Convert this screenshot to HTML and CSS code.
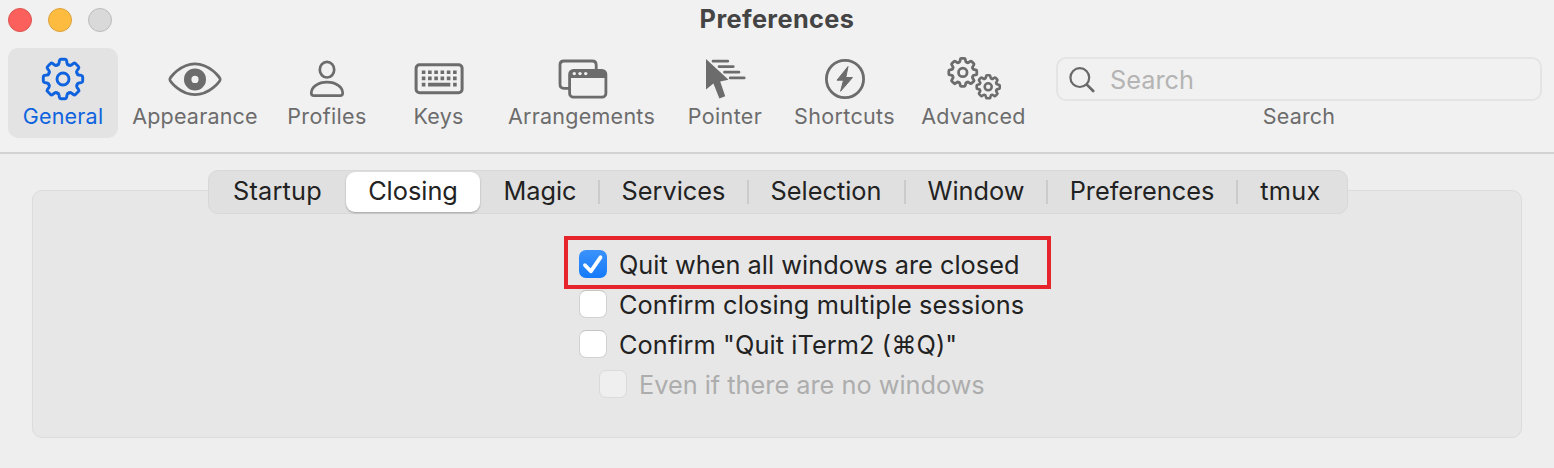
FILE: index.html
```html
<!DOCTYPE html>
<html lang="en">
<head>
<meta charset="utf-8">
<title>Preferences</title>
<link rel="stylesheet" href="styles.css">
</head>
<body>
<svg class="defs" aria-hidden="true">
  <defs>
    <path id="tooth" d="M-5.82-14.04Q-4.2-14.3-4-15.8L-3.6-18.3Q-3.4-19.7-2.1-19.7H2.1Q3.4-19.7 3.6-18.3L4-15.8Q4.2-14.3 5.82-14.04"/>
    <g id="gear">
      <use href="#tooth"/><use href="#tooth" transform="rotate(45)"/><use href="#tooth" transform="rotate(90)"/><use href="#tooth" transform="rotate(135)"/>
      <use href="#tooth" transform="rotate(180)"/><use href="#tooth" transform="rotate(225)"/><use href="#tooth" transform="rotate(270)"/><use href="#tooth" transform="rotate(315)"/>
      <circle r="6"/>
    </g>
  </defs>
</svg>
<div class="window">
  <header class="header">
    <div class="titlebar">
      <div class="lights"><i class="light close"></i><i class="light minimize"></i><i class="light zoom"></i></div>
      <h1 class="title">Preferences</h1>
    </div>
    <nav class="toolbar">
      <a class="tool general active"><svg viewBox="-28 -22 56 44"><use href="#gear" class="line" stroke-width="2.9"/></svg><span>General</span></a>
      <a class="tool appearance"><svg viewBox="-28 -22 56 44"><path class="line" stroke-width="2.7" d="M-25.2.5C-25.2-1-15-15.2 0-15.2S25.2-1 25.2.5 15 15.6 0 15.6-25.2 2-25.2.5Z"/><circle cy=".4" r="7.3" class="line" stroke-width="7.4"/></svg><span>Appearance</span></a>
      <a class="tool profiles"><svg viewBox="-28 -22 56 44"><ellipse class="line" stroke-width="2.7" cy="-9.3" rx="7.2" ry="7.8"/><path class="line" stroke-width="2.7" d="M-15.7 14C-15.7 8-9 3.2 0 3.2S15.7 8 15.7 14Q15.7 16.6 13.2 16.6H-13.2Q-15.7 16.6-15.7 14Z"/></svg><span>Profiles</span></a>
      <a class="tool keys"><svg viewBox="-28 -22 56 44"><rect class="line" stroke-width="3" x="-22.9" y="-14.3" width="46" height="28" rx="3.5"/><path class="line dots" stroke-width="3.6" d="M-17.2-6.8H18M-17.2-.6H18"/><path class="solid" d="M-17.2 3.8h3.6v3.6h-3.6zM-10.9 3.8H11.3v3.6H-10.9zM14.1 3.8h3.6v3.6h-3.6z"/></svg><span>Keys</span></a>
      <a class="tool arrangements"><svg viewBox="-28 -22 56 44"><path class="line" stroke-width="2.8" d="M-13 9.3H-18Q-22 9.3-22 5.3V-14Q-22-18-18-18H10.2Q14.2-18 14.2-14V-10"/><rect class="line" stroke-width="2.8" x="-12.4" y="-8.6" width="36.3" height="26.8" rx="3.8"/><path class="solid" d="M-12-6Q-12-9-8-9H20Q24-9 24-5V-.9H-12Z"/><g class="hole"><circle cx="-7.7" cy="-5.4" r="1.7"/><circle cx="-2" cy="-5.4" r="1.7"/><circle cx="3.7" cy="-5.4" r="1.7"/></g></svg><span>Arrangements</span></a>
      <a class="tool pointer"><svg viewBox="-28 -22 56 44"><path class="solid" d="M-19-20 3.5.8-4.8 2.4.2 17.3-5.6 19.5-11.6 4.4-19 10.6Z"/><path class="line" stroke-width="2.7" d="M-12-17.8H2.8M-6-12.4H8.3M-.5-6.8H14M5.2-1.1H19.2"/></svg><span>Pointer</span></a>
      <a class="tool shortcuts"><svg viewBox="-28 -22 56 44"><circle class="line" stroke-width="2.8" r="18.6"/><path class="solid join" d="M3-12.5-8 1.2H-1.5L-4.4 12.3 7.5-1.5H.8Z"/></svg><span>Shortcuts</span></a>
      <a class="tool advanced"><svg viewBox="-28 -22 56 44"><use href="#gear" class="line" stroke-width="3.9" transform="translate(-11.2 -6.6) scale(.71)"/><use href="#gear" class="line" stroke-width="4.4" transform="translate(14.2 7.8) scale(.585)"/></svg><span>Advanced</span></a>
      <div class="search">
        <div class="field"><svg viewBox="0 0 26 26"><circle class="line" stroke-width="2.2" cx="10.8" cy="10.6" r="9.4"/><path class="line" stroke-width="2.7" d="M17.8 17.6 24.2 24"/></svg><span>Search</span></div>
        <span class="caption">Search</span>
      </div>
    </nav>
  </header>
  <main class="content">
    <div class="tabs">
      <a class="tab startup"><span>Startup</span></a>
      <a class="tab closing selected"><span>Closing</span></a>
      <a class="tab magic"><span>Magic</span></a>
      <a class="tab services divided"><span>Services</span></a>
      <a class="tab selection divided"><span>Selection</span></a>
      <a class="tab win divided"><span>Window</span></a>
      <a class="tab prefs divided"><span>Preferences</span></a>
      <a class="tab tmux divided"><span>tmux</span></a>
    </div>
    <section class="panel">
      <label class="option highlighted"><i class="box checked"><svg viewBox="0 0 28 28"><path d="M6 15.2 11.8 21.3 21.5 7.3"/></svg></i><span>Quit when all windows are closed</span></label>
      <label class="option multiple"><i class="box"></i><span>Confirm closing multiple sessions</span></label>
      <label class="option quit"><i class="box"></i><span>Confirm "Quit iTerm2 (⌘Q)"</span></label>
      <label class="option disabled"><i class="box"></i><span>Even if there are no windows</span></label>
    </section>
  </main>
</div>
</body>
</html>
```
FILE: styles.css
```css
* { box-sizing: border-box; }
body { margin: 0; font-family: Inter, "Liberation Sans", sans-serif; color: #222; }
.defs { position: absolute; width: 0; height: 0; }
.window { width: 1554px; height: 468px; background: #eeeeee; overflow: hidden; }
.header { height: 154px; background: #f1f1f1; border-bottom: 2px solid #d2d2d2; }
.titlebar { display: grid; grid-template-columns: 208px 1fr 208px; align-items: center; height: 40px; }
.lights { display: flex; gap: 16px; padding-left: 8px; }
.light { width: 24px; height: 24px; border-radius: 50%; border: 1px solid #dc5450; background: #fc605c; }
.minimize { background: #fdbc40; border-color: #dca23c; }
.zoom { background: #d9d9d9; border-color: #bcbcbc; }
.title { margin: 0; padding-bottom: 2px; font-size: 25.3px; line-height: 38px; font-weight: 700; letter-spacing: .4px; text-align: center; color: #444; }
.toolbar { display: flex; padding: 8px 12px 0 8px; color: #6c6c6c; }
.tool { display: flex; flex-direction: column; align-items: center; height: 90px; padding-top: 9px; border-radius: 10px; font-size: 21.5px; line-height: 28px; letter-spacing: .2px; white-space: nowrap; }
.tool svg { width: 56px; height: 44px; margin-bottom: 1px; }
.tool.active { background: #e3e3e3; color: #1063de; }
.general { width: 110px; }
.appearance { width: 154px; }
.profiles { width: 110px; letter-spacing: .35px; }
.keys { width: 113px; }
.arrangements { width: 173px; letter-spacing: .25px; }
.pointer { width: 114px; letter-spacing: .35px; }
.shortcuts { width: 125px; letter-spacing: .35px; }
.advanced { width: 133px; }
.line { fill: none; stroke: currentColor; stroke-linecap: round; stroke-linejoin: round; }
.solid { fill: currentColor; }
.join { stroke: currentColor; stroke-width: 1; stroke-linejoin: round; }
.dots { stroke-dasharray: 3.6 2.65; stroke-linecap: butt; }
.hole { fill: #f1f1f1; }
.search { flex: 1; display: flex; flex-direction: column; align-items: center; padding: 9px 0 0 16px; }
.field { display: flex; align-items: center; gap: 15px; width: 100%; height: 44px; padding: 1px 0 0 11px; border: 2px solid #e4e4e4; border-radius: 10px; font-size: 25.3px; color: #b4b4b4; }
.field svg { width: 26px; height: 26px; color: #696969; }
.caption { font-size: 21.5px; line-height: 28px; letter-spacing: .2px; margin-top: 1px; }
.content { padding: 16px 32px 0; }
.tabs { position: relative; z-index: 1; display: flex; width: 1140px; height: 44px; margin-left: 176px; padding: 2px 0; border: 1px solid #d8d8d8; border-radius: 10px; background: #e0e0e0; }
.tab { display: flex; align-items: center; justify-content: center; font-size: 25.3px; white-space: nowrap; margin: -1px 0; height: 40px; }
.tab span { padding-bottom: 3px; }
.selected { background: #fff; border-radius: 9px; box-shadow: 0 1px 2px rgba(0,0,0,.28); }
.divided::before { content: ""; width: 2px; height: 24px; margin-right: auto; background: #cbcbcb; }
.divided span { margin-right: auto; }
.startup { width: 137px; letter-spacing: .2px; }
.closing { width: 134px; }
.magic { width: 118px; padding-left: 2px; }
.services { width: 149px; }
.selection { width: 157px; padding-right: 1px; }
.win { width: 142px; }
.prefs { width: 190px; }
.tmux { width: 110px; padding-right: 3px; letter-spacing: .3px; }
.panel { height: 248px; margin-top: -24px; padding: 45px 0 0 531px; border: 1px solid #dcdcdc; border-radius: 10px; background: #e7e7e7; }
.option { display: flex; align-items: center; gap: 12px; width: max-content; height: 40px; padding-left: 15px; font-size: 25.3px; white-space: nowrap; }
.highlighted { width: 487px; height: 53px; padding: 2px 0 0 11px; border: 4px solid #e5242b; margin-bottom: -5px; letter-spacing: .03px; }
.highlighted span { padding-top: 2px; }
.multiple { letter-spacing: .1px; }
.quit { letter-spacing: .1px; }
.box { width: 28px; height: 28px; border-radius: 7px; background: #fff; border: 1px solid #d2d2d2; border-top-color: #c4c4c4; }
.checked { border: 0; background: linear-gradient(#3c92fa, #147afa); }
.checked svg { display: block; fill: none; stroke: #fff; stroke-width: 3.8; stroke-linecap: round; stroke-linejoin: round; }
.disabled { padding-left: 35px; color: #adadad; }
.disabled .box { background: #efefef; border-color: #dadada; }
```
